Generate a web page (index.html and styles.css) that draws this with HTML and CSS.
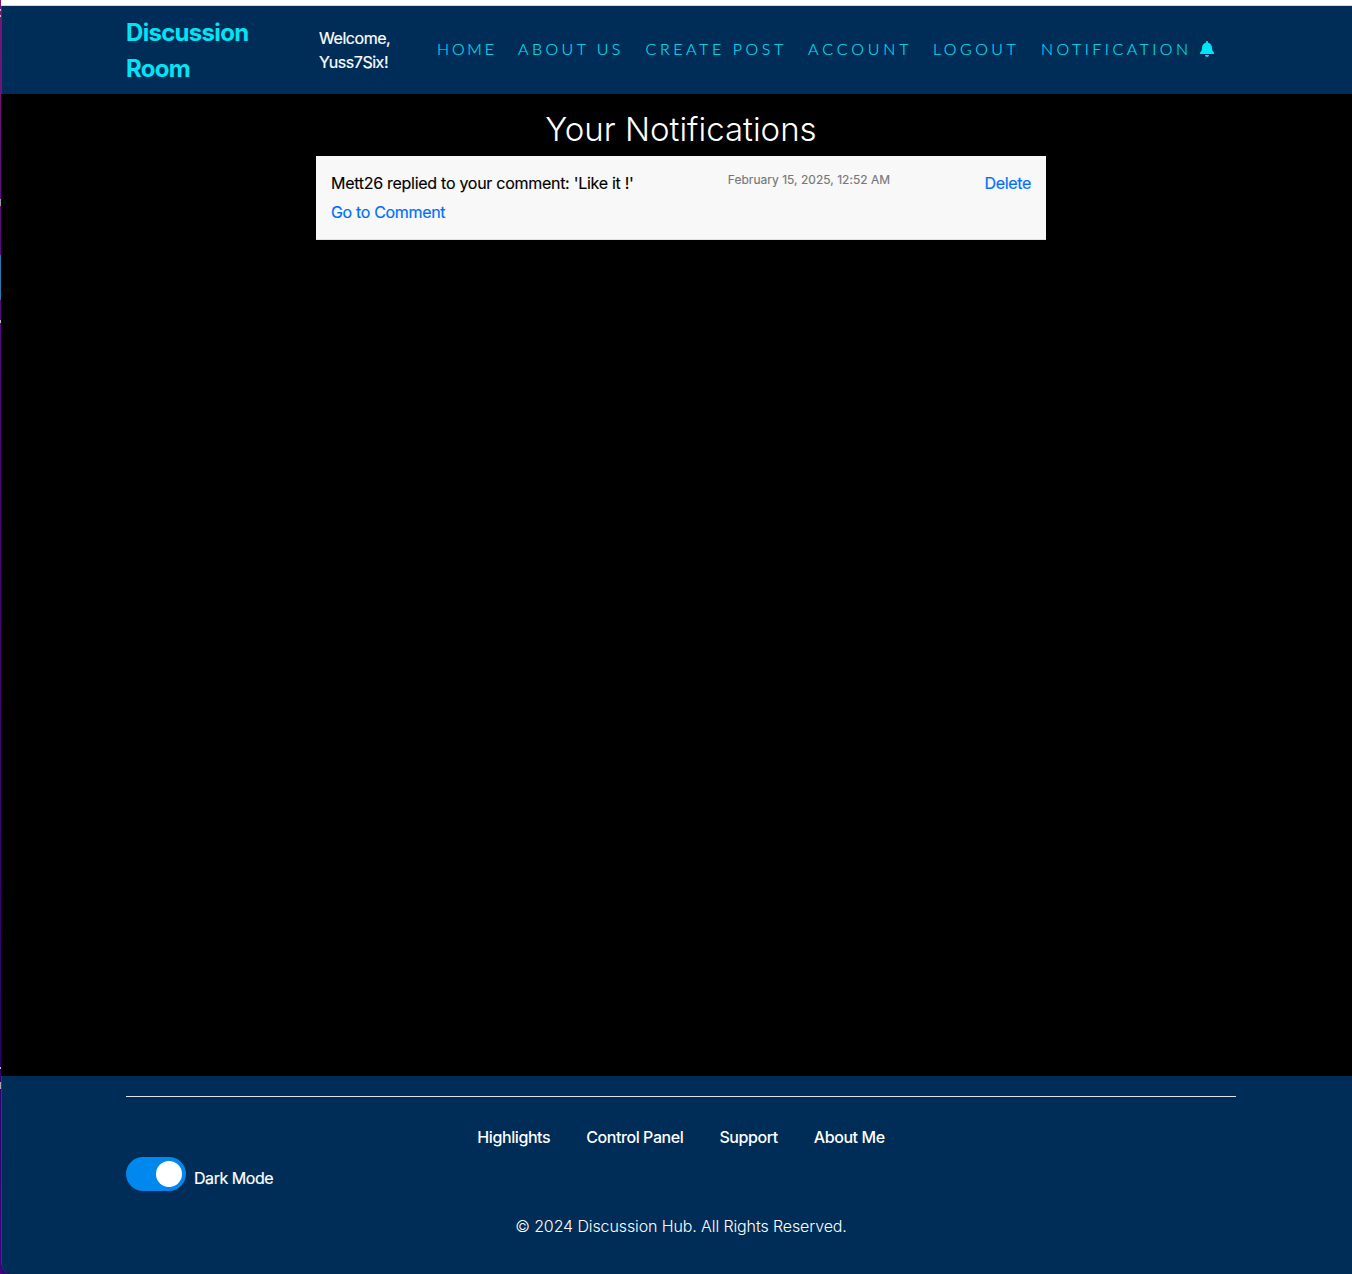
FILE: index.html
```html
<!DOCTYPE html>
<html lang="en">
<head>
<meta charset="utf-8">
<title>Your Notifications</title>
<link rel="stylesheet" href="styles.css">
</head>
<body>
<div class="window">
  <div class="chrome"></div>
  <header class="navbar">
    <a class="brand">Discussion Room</a>
    <p class="welcome">Welcome, Yuss7Six!</p>
    <nav class="menu">
      <a class="home">HOME</a>
      <a>ABOUT US</a>
      <a class="create">CREATE POST</a>
      <a class="account">ACCOUNT</a>
      <a>LOGOUT</a>
      <a>NOTIFICATION</a>
      <svg class="bell" viewBox="0 0 448 512" fill="currentColor"><path d="M224 512c35.300 0 63.900-28.650 63.900-64H160.100c0 35.350 28.600 64 63.900 64zm215.400-149.700c-19.300-20.800-55.500-52-55.500-154.300 0-77.700-54.500-139.900-127.900-155.200V32c0-17.700-14.300-32-32-32s-32 14.300-32 32v20.800C118.600 68.100 64.100 130.300 64.100 208c0 102.300-36.200 133.500-55.500 154.300-6 6.400-8.700 14.100-8.600 21.700.1 16.400 13 32 32.100 32h383.800c19.100 0 32-15.600 32.100-32 .1-7.600-2.600-15.300-8.600-21.700z"/></svg>
    </nav>
  </header>
  <main class="content">
    <h1 class="title">Your Notifications</h1>
    <section class="notice">
      <div class="message">
        <p class="reply">Mett26 replied to your comment: 'Like it !'</p>
        <a class="link goto">Go to Comment</a>
      </div>
      <time class="date">February 15, 2025, 12:52 AM</time>
      <a class="link delete">Delete</a>
    </section>
  </main>
  <footer class="footer">
    <hr class="rule">
    <nav class="footer-links">
      <a>Highlights</a>
      <a>Control Panel</a>
      <a>Support</a>
      <a>About Me</a>
    </nav>
    <div class="mode">
      <span class="switch"><span class="knob"></span></span>
      <span class="mode-label">Dark Mode</span>
    </div>
    <p class="copyright">© 2024 Discussion Hub. All Rights Reserved.</p>
  </footer>
</div>
</body>
</html>
```
FILE: styles.css
```css
* { box-sizing: border-box; }

body {
  margin: 0;
  height: 1274px;
  overflow: hidden;
  padding-left: 1px;
  font-family: Inter, "Liberation Sans", sans-serif;
  font-size: 16px;
  line-height: 24px;
  letter-spacing: -0.28px;
  background:
    linear-gradient(#c4b9c9, #c4b9c9) 0 9px / 1px 2px no-repeat,
    linear-gradient(#c4b9c9, #c4b9c9) 0 15px / 1px 2px no-repeat,
    linear-gradient(#999, #999) 0 199px / 1px 7px no-repeat,
    linear-gradient(#287bad, #287bad) 0 255px / 1px 45px no-repeat,
    linear-gradient(#bbb, #bbb) 0 320px / 1px 3px no-repeat,
    linear-gradient(#bbb, #bbb) 0 1067px / 1px 2px no-repeat,
    linear-gradient(#aaa, #aaa) 0 1082px / 1px 7px no-repeat,
    linear-gradient(#7c1674, #5c0780 20%, #2f0070 85%, #400080);
}

p, h1 { margin: 0; }

.window {
  width: 1360px;
  height: 1274px;
  display: flex;
  flex-direction: column;
  overflow: hidden;
  border-bottom-left-radius: 10px;
  background: #000;
}

.chrome {
  height: 6px;
  flex: none;
  background: #fff;
  border-bottom: 1px solid #cfdcde;
}

.navbar {
  height: 88px;
  flex: none;
  display: flex;
  align-items: center;
  padding: 0 125px;
  background: #002c58;
  box-shadow: inset 1px 0 #1d4568;
}

.brand {
  width: 193px;
  padding: 2px 60px 0 0;
  color: #00e5f5;
  font-size: 24px;
  font-weight: 700;
  line-height: 36px;
  letter-spacing: -0.7px;
}

.welcome {
  width: 118px;
  padding-right: 30px;
  color: #fff;
  letter-spacing: -0.45px;
  -webkit-text-stroke: 0.2px;
}

.menu {
  display: grid;
  grid-template-columns: 81px 127.500px 162.500px 125px 108px 159px 14px;
  align-items: center;
  padding-bottom: 2px;
  color: #00e5f5;
  font-family: Lato, sans-serif;
  font-weight: 300;
  letter-spacing: 3.450px;
  white-space: nowrap;
  -webkit-text-stroke: 0.1px;
}

.home { letter-spacing: 2.800px; }

.create { letter-spacing: 3.600px; }

.account { letter-spacing: 3.900px; }

.bell {
  width: 14px;
  height: 16px;
}

.content {
  flex: 1;
  display: flex;
  flex-direction: column;
  align-items: center;
  padding-top: 14px;
}

.title {
  height: 48px;
  color: #fff;
  font-size: 33px;
  font-weight: 300;
  line-height: 42px;
  letter-spacing: 0;
}

.notice {
  width: 730px;
  height: 84px;
  display: flex;
  justify-content: space-between;
  align-items: flex-start;
  padding: 15px;
  color: #000;
  background: #f8f8f8;
  border-bottom: 1px solid #dde2e0;
}

.reply { -webkit-text-stroke: 0.15px; }

.goto {
  display: block;
  margin-top: 5px;
}

.link {
  color: #0070f8;
  letter-spacing: -0.33px;
  -webkit-text-stroke: 0.2px;
}

.date {
  color: #777;
  font-size: 12px;
  line-height: 18px;
  letter-spacing: 0.03px;
  -webkit-text-stroke: 0.15px;
}

.footer {
  height: 198px;
  flex: none;
  padding: 20px 125px 0;
  color: #fff;
  background: #002c58;
  box-shadow: inset 1px 0 #1d4568;
  border-bottom-left-radius: 10px;
}

.rule {
  margin: 0;
  border: 0;
  height: 1px;
  background: #dde6ec;
}

.footer-links {
  display: flex;
  justify-content: center;
  gap: 36px;
  padding-top: 28px;
  font-weight: 500;
  letter-spacing: -0.42px;
}

.mode {
  display: flex;
  gap: 8px;
  height: 42px;
  padding-top: 8px;
}

.switch {
  width: 60px;
  height: 34px;
  flex: none;
  display: flex;
  justify-content: flex-end;
  padding: 4px;
  border-radius: 17px;
  background: #0088ee;
}

.knob {
  width: 26px;
  height: 26px;
  border-radius: 50%;
  background: #fff;
}

.mode-label {
  padding-top: 9px;
  letter-spacing: -0.45px;
  -webkit-text-stroke: 0.2px;
}

.copyright {
  padding-top: 23px;
  text-align: center;
  font-weight: 300;
  letter-spacing: -0.11px;
}
```
